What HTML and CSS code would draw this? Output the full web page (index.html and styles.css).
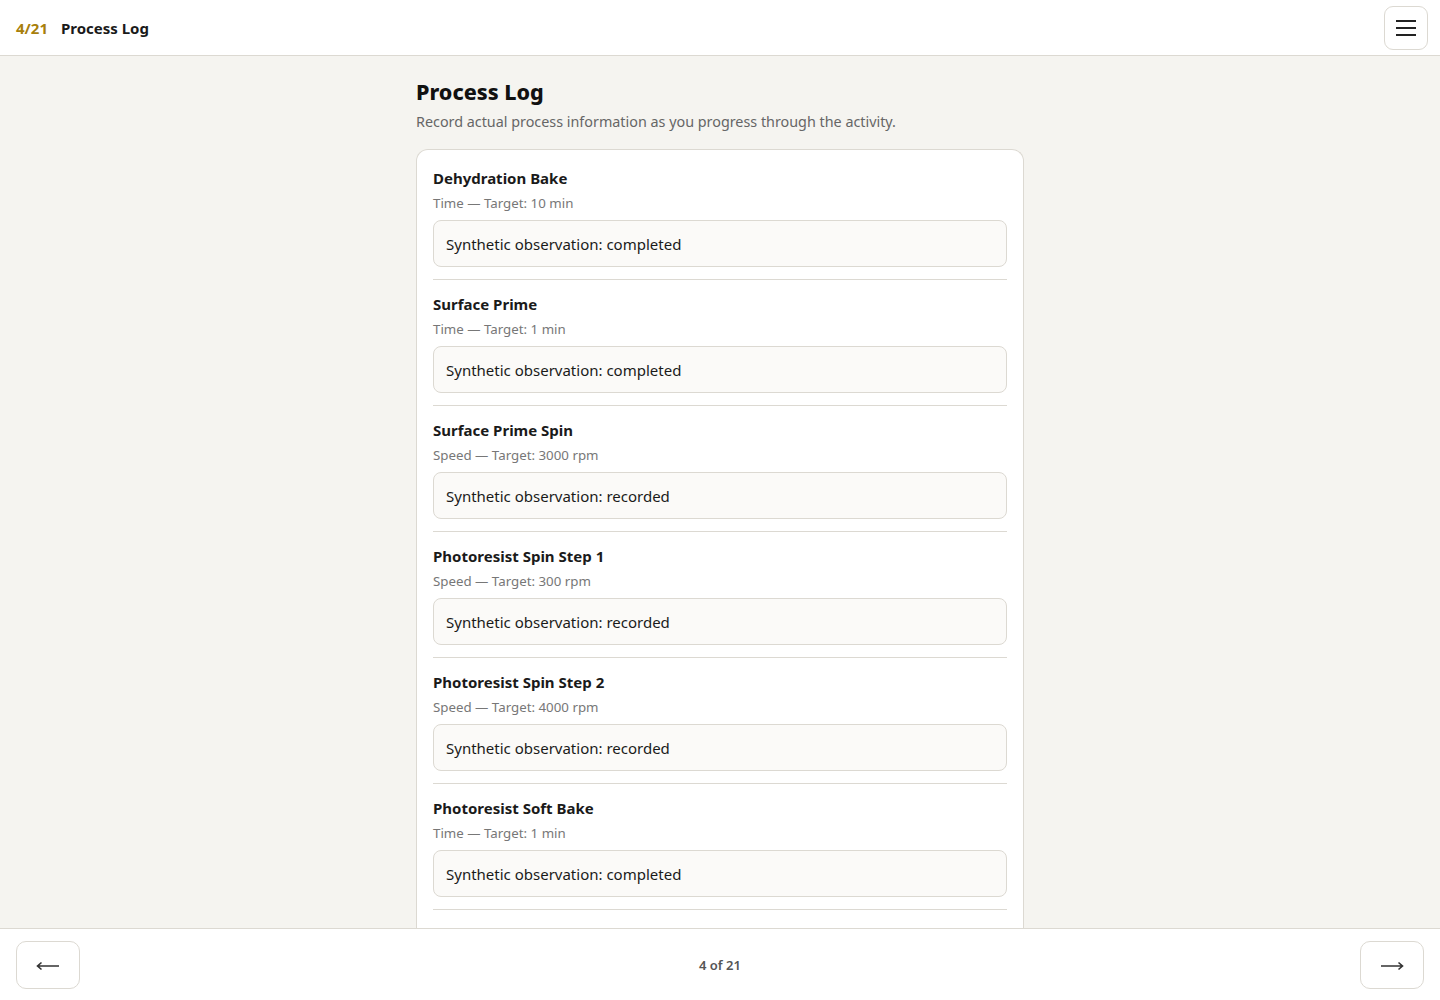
FILE: index.html
```html
<!DOCTYPE html>
<html lang="en">
<head>
<meta charset="utf-8">
<title>Process Log</title>
<link rel="stylesheet" href="styles.css">
</head>
<body>
<header class="topbar">
  <div class="crumb"><span class="step">4/21</span><span class="crumb-title">Process Log</span></div>
  <button class="menu-btn" aria-label="Menu">
    <svg width="20" height="16" viewBox="0 0 20 16"><path d="M0 1h20M0 8h20M0 15h20" stroke="#222" stroke-width="2" fill="none"/></svg>
  </button>
</header>
<main class="main">
  <h1 class="page-title">Process Log</h1>
  <p class="page-sub">Record actual process information as you progress through the activity.</p>
  <section class="card">
    <div class="item">
      <div class="item-title">Dehydration Bake</div>
      <div class="item-meta">Time — Target: 10 min</div>
      <div class="field">Synthetic observation: completed</div>
    </div>
    <div class="item">
      <div class="item-title">Surface Prime</div>
      <div class="item-meta">Time — Target: 1 min</div>
      <div class="field">Synthetic observation: completed</div>
    </div>
    <div class="item">
      <div class="item-title">Surface Prime Spin</div>
      <div class="item-meta">Speed — Target: 3000 rpm</div>
      <div class="field">Synthetic observation: recorded</div>
    </div>
    <div class="item">
      <div class="item-title">Photoresist Spin Step 1</div>
      <div class="item-meta">Speed — Target: 300 rpm</div>
      <div class="field">Synthetic observation: recorded</div>
    </div>
    <div class="item">
      <div class="item-title">Photoresist Spin Step 2</div>
      <div class="item-meta">Speed — Target: 4000 rpm</div>
      <div class="field">Synthetic observation: recorded</div>
    </div>
    <div class="item">
      <div class="item-title">Photoresist Soft Bake</div>
      <div class="item-meta">Time — Target: 1 min</div>
      <div class="field">Synthetic observation: completed</div>
    </div>
  </section>
</main>
<footer class="bottombar">
  <button class="nav-btn" aria-label="Previous">
    <svg class="arrow" width="24" height="10" viewBox="0 0 24 10"><path d="M1.5 5H23M5.5 1.5L1.5 5l4 3.5" stroke="#333" stroke-width="1.6" fill="none"/></svg>
  </button>
  <div class="pager">4 of 21</div>
  <button class="nav-btn" aria-label="Next">
    <svg class="arrow" width="24" height="10" viewBox="0 0 24 10"><path d="M1 5h21.5M18.5 1.5l4 3.5-4 3.5" stroke="#333" stroke-width="1.6" fill="none"/></svg>
  </button>
</footer>
</body>
</html>
```

FILE: styles.css
```css
* { box-sizing: border-box; }
html, body { margin: 0; padding: 0; }
body {
  background: #f5f4f0;
  font-family: "Noto Sans", "Open Sans", sans-serif;
  color: #1a1a1a;
}
.topbar {
  position: fixed;
  top: 0; left: 0; right: 0;
  height: 56px;
  background: #fff;
  border-bottom: 1px solid #dcd9d2;
  display: flex;
  align-items: center;
  justify-content: space-between;
  padding: 0 12px 0 16px;
  z-index: 10;
}
.crumb { display: flex; align-items: center; gap: 13px; font-size: 15px; font-weight: 700; }
.step { color: #a87f0c; }
.crumb-title { color: #1a1a1a; }
.menu-btn {
  width: 44px; height: 44px;
  border: 1px solid #dcd9d2;
  border-radius: 9px;
  background: #fff;
  display: flex; align-items: center; justify-content: center;
  padding: 0;
}
.main {
  width: 608px;
  margin: 0 auto;
  padding: 77px 0 0;
}
.page-title {
  font-size: 21.5px;
  line-height: 30px;
  font-weight: 800;
  margin: 0;
  color: #111;
}
.page-sub {
  font-size: 14.35px;
  line-height: 22px;
  color: #666;
  margin: 4px 0 16px;
}
.card {
  background: #fff;
  border: 1px solid #dcd9d2;
  border-bottom: 0;
  border-radius: 12px 12px 0 0;
  padding: 4px 16px 40px;
}
.item {
  padding: 14px 0 12px;
  border-bottom: 1px solid #dcd9d2;
}
.item-title { font-size: 15px; line-height: 20px; font-weight: 700; color: #1a1a1a; }
.item-meta { font-size: 13.3px; line-height: 18px; color: #777; margin-top: 6px; }
.field {
  margin-top: 8px;
  height: 47px;
  border: 1px solid #dcd9d2;
  border-radius: 8px;
  background: #fbfaf8;
  padding: 0 12px;
  display: flex; align-items: center;
  font-size: 15px;
  color: #1a1a1a;
}
.bottombar {
  position: fixed;
  left: 0; right: 0; bottom: 0;
  height: 72px;
  background: #fff;
  border-top: 1px solid #dcd9d2;
  display: flex;
  align-items: center;
  justify-content: space-between;
  padding: 0 16px;
  z-index: 10;
}
.nav-btn {
  width: 64px; height: 48px;
  border: 1px solid #dcd9d2;
  border-radius: 10px;
  background: #fff;
  display: flex; align-items: center; justify-content: center;
  padding: 0;
}
.arrow { margin-top: 3px; }
.pager { font-size: 13px; font-weight: 600; color: #555; }
```
